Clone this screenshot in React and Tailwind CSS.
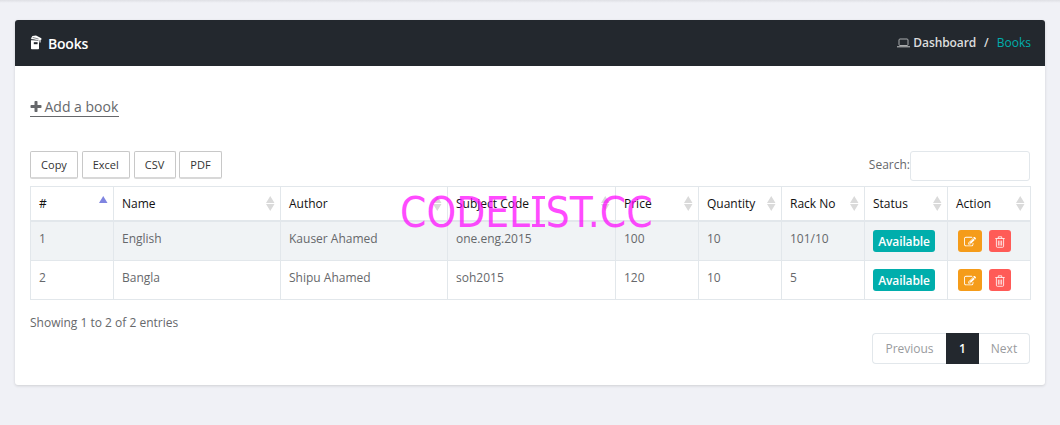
const heads = ['#', 'Name', 'Author', 'Subject Code', 'Price', 'Quantity', 'Rack No', 'Status', 'Action'];
const rows = [
  ['1', 'English', 'Kauser Ahamed', 'one.eng.2015', '100', '10', '101/10'],
  ['2', 'Bangla', 'Shipu Ahamed', 'soh2015', '120', '10', '5'],
];
const grid = 'grid grid-cols-[83px_167px_167px_168px_83px_83px_83px_83px_83px]';

function BookIcon() {
  return (
    <svg width="12" height="15" viewBox="0 0 12 15" className="mr-[6px] -mt-[2px]">
      <path d="M1 5.2h8v8.2q0 .8-.8.8H1.8q-.8 0-.8-.8z" fill="#fff" />
      <path d="M.8 3.8 2.4 1 6 .4l5.4 2.8v1.5L8.4 5.8z" fill="#fff" />
      <path d="M9.4 4.4h1.3v3h-1.3z" fill="#ddd" />
      <path d="M1 4.2l7.4 1.4M2.6 2.4l6 1.6" stroke="#55595e" strokeWidth=".7" />
      <path d="M3.8 7.2h3.8v2H3.8z" fill="#23282e" />
    </svg>
  );
}

function LaptopIcon() {
  return (
    <svg width="13" height="10" viewBox="0 0 13 10" className="mr-[3px]" fill="none" stroke="#aaacae">
      <rect x="2" y="1" width="9" height="6.5" rx="1" />
      <path d="M0 8.8h13" stroke="#c5c6c8" />
    </svg>
  );
}

function PlusIcon() {
  return (
    <svg width="14" height="14" viewBox="0 0 1792 1792" fill="#66686b" className="-ml-[1px] mr-[1.5px] mt-px">
      <path d="M1600 736v192q0 40-28 68t-68 28h-416v416q0 40-28 68t-68 28h-192q-40 0-68-28t-28-68v-416h-416q-40 0-68-28t-28-68v-192q0-40 28-68t68-28h416v-416q0-40 28-68t68-28h192q40 0 68 28t28 68v416h416q40 0 68 28t28 68z" />
    </svg>
  );
}

function EditIcon() {
  return (
    <svg width="12" height="12" viewBox="0 0 1792 1792" fill="#fff" className="mt-px">
      <path d="M888 1184l116-116-152-152-116 116v56h96v96h56zm440-720q-16-16-33 1l-350 350q-17 17-1 33t33-1l350-350q17-17 1-33zm80 594v190q0 119-84.5 203.5t-203.5 84.5h-832q-119 0-203.5-84.5t-84.5-203.5v-832q0-119 84.5-203.5t203.5-84.5h832q63 0 117 25 15 7 18 23 3 17-9 29l-49 49q-14 14-32 8-23-6-45-6h-832q-66 0-113 47t-47 113v832q0 66 47 113t113 47h832q66 0 113-47t47-113v-126q0-13 9-22l64-64q15-15 35-7t20 29zm-96-738l288 288-672 672h-288v-288zm444 132l-92 92-288-288 92-92q28-28 68-28t68 28l152 152q28 28 28 68t-28 68z" />
    </svg>
  );
}

function TrashIcon() {
  return (
    <svg width="10" height="12" viewBox="0 0 10 12" fill="none" stroke="#fff" strokeWidth=".8" className="mt-px">
      <path d="M.3 2.5h9.4M3.3 2.3V.8h3.4v1.5M1.4 2.7v7.6q0 1 1 1h5.2q1 0 1-1V2.7M3.4 4.6v5M5 4.6v5M6.6 4.6v5" />
    </svg>
  );
}

function Sort({ asc }) {
  return (
    <svg width="8.5" height="15" viewBox="0 0 8 15" preserveAspectRatio="none" className="mt-[9px] mr-[5.5px] shrink-0">
      {asc ? (
        <path d="M0 7 4 0l4 7z" fill="#7f84e0" />
      ) : (
        <path d="M0 7 4 0l4 7zM0 8h8l-4 7z" fill="#dadada" />
      )}
    </svg>
  );
}

export default function App() {
  return (
    <div className="relative h-[425px] w-[1060px] overflow-hidden bg-[#f0f1f6] font-['Open_Sans',sans-serif] text-[12px] text-[#66686b]">
      <div className="h-[3px] bg-linear-to-b from-[#dfe0e5] to-[#f0f1f6]" />
      <section className="mx-[15px] mt-[17px] h-[365px] rounded-[3px] bg-white shadow-[0_1px_3px_rgba(0,0,0,0.14)]">
        <header className="flex h-[46px] items-center justify-between rounded-t-[3px] bg-[#23282e] pl-[15px] pr-[14px]">
          <h1 className="flex items-center text-[14px] font-semibold tracking-[-0.2px] text-white"><BookIcon />Books</h1>
          <nav className="flex items-center text-[12px] font-semibold text-[#dcdddd]">
            <LaptopIcon />
            <span className="tracking-[-0.1px]">Dashboard</span>
            <span className="mx-2">/</span>
            <span className="font-medium text-[#00aeac]">Books</span>
          </nav>
        </header>
        <div className="px-[15px] pt-[30px]">
          <a className="flex h-[21px] w-[89px] items-center whitespace-nowrap border-b border-[#66686b] text-[14px]">
            <PlusIcon />Add a book
          </a>
          <div className="mt-[34px] flex h-[35px] justify-between">
            <div className="flex gap-[3.5px] text-[11px] text-[#333]">
              <button className="h-[28px] w-[48px] rounded-[2px] border border-b-2 border-[#c8c8c8] border-b-[#d8d8d8] pt-px">Copy</button>
              <button className="h-[28px] w-[48.5px] rounded-[2px] border border-b-2 border-[#c8c8c8] border-b-[#d8d8d8] pt-px">Excel</button>
              <button className="h-[28px] w-[42px] rounded-[2px] border border-b-2 border-[#c8c8c8] border-b-[#d8d8d8] pt-px">CSV</button>
              <button className="h-[28px] w-[43px] rounded-[2px] border border-b-2 border-[#c8c8c8] border-b-[#d8d8d8] pt-px">PDF</button>
            </div>
            <label className="flex h-[30px] items-center leading-[26px]">
              <span className="-mt-[3px]">Search:</span>
              <input className="h-[30px] w-[120px] rounded-[3px] border border-[#e2e7eb] outline-none" />
            </label>
          </div>
          <div className="w-[1001px] border-l border-t border-[#e2e7eb]">
            <div className={`${grid} h-[35px] border-b-2 border-[#e2e7eb] font-medium text-[#111]`}>
              {heads.map((h, i) => (
                <div key={h} className="flex justify-between border-r border-[#e2e7eb] pl-2">
                  <span className="whitespace-nowrap leading-[34px]">{h}</span>
                  <Sort asc={i === 0} />
                </div>
              ))}
            </div>
            {rows.map((r, i) => (
              <div key={r[0]} className={`${grid} h-[39px] border-b border-[#e2e7eb] ${i === 0 ? 'bg-[#f0f3f5]' : 'bg-white'}`}>
                {r.map((c, j) => (
                  <div key={j} className="border-r border-[#e2e7eb] pl-2 leading-[33px]">{c}</div>
                ))}
                <div className="border-r border-[#e2e7eb] pl-2 pt-[8px]">
                  <span className="flex h-[22px] w-[62px] items-center justify-center rounded-[3px] bg-[#00aeac] pt-[2px] font-semibold tracking-[-0.15px] text-white">Available</span>
                </div>
                <div className="flex gap-[7px] border-r border-[#e2e7eb] pl-[10px] pt-[8px]">
                  <button className="flex h-[22px] w-[24px] items-center justify-center rounded-[3px] bg-[#f59c1a]"><EditIcon /></button>
                  <button className="flex h-[22px] w-[22px] items-center justify-center rounded-[3px] bg-[#ff5b57]"><TrashIcon /></button>
                </div>
              </div>
            ))}
          </div>
          <p className="mt-[14px] h-[18px] leading-[18px]">Showing 1 to 2 of 2 entries</p>
          <div className="mt-px flex justify-end">
            <div className="flex h-[31px] text-[12px] leading-[29px] text-[#999b9e]">
              <span className="w-[74px] rounded-l-[4px] border border-r-0 border-[#e2e7eb] text-center">Previous</span>
              <span className="w-[33px] border border-[#23282e] bg-[#23282e] text-center font-semibold text-white">1</span>
              <span className="w-[51px] rounded-r-[4px] border border-l-0 border-[#e2e7eb] text-center">Next</span>
            </div>
          </div>
        </div>
      </section>
      <div className="absolute left-[400px] top-[188px] whitespace-nowrap font-['DejaVu_Sans_Condensed','DejaVu_Sans',sans-serif] text-[42px] leading-[50px] text-[#ff00ff] opacity-70 [font-stretch:condensed]">
        CODEL<span className="relative inline-block w-[15.5px] text-center before:absolute before:left-[2px] before:top-[8px] before:h-[3px] before:w-[13px] before:bg-[#ff00ff] after:absolute after:left-[2px] after:top-[36px] after:h-[3px] after:w-[13px] after:bg-[#ff00ff]">I</span>ST.CC
      </div>
    </div>
  );
}
